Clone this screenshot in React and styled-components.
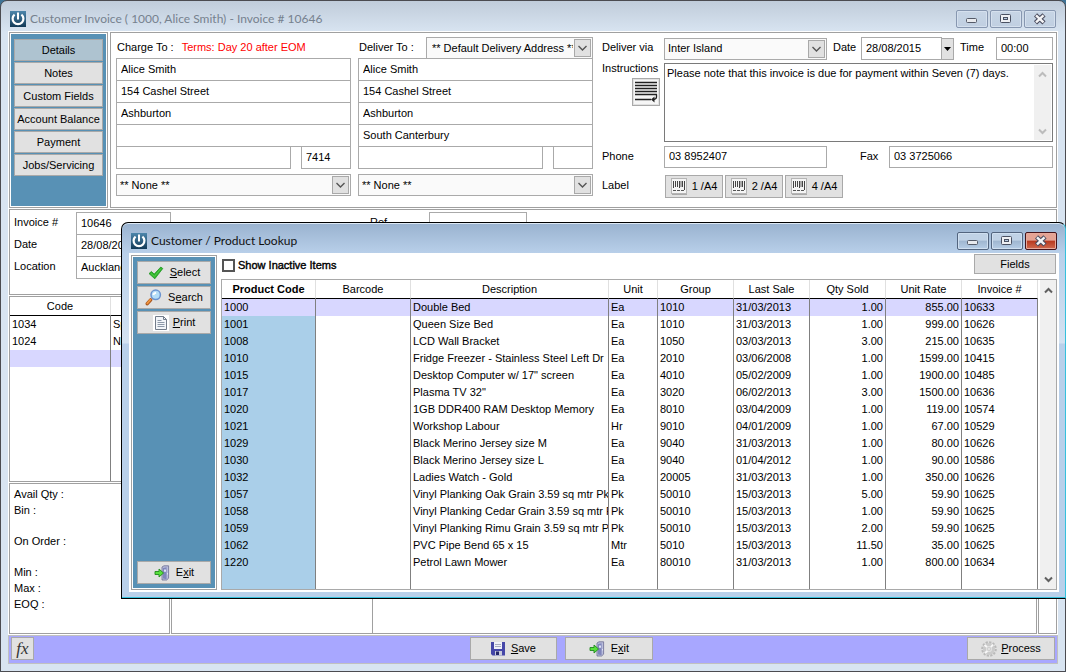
import styled, { createGlobalStyle, css } from "styled-components";

const GlobalStyle = createGlobalStyle`
  * {
    box-sizing: border-box;
  }
  body {
    margin: 0;
    background: #3f7396;
    color: #000;
    font: 11px/15px "Liberation Sans", Arial, sans-serif;
  }
  button, input, select, textarea {
    font: inherit;
    color: inherit;
    margin: 0;
    border-radius: 0;
  }
`;

/* ---------- windows ---------- */

const MainWindow = styled.div`
  position: relative;
  display: flex;
  flex-direction: column;
  height: 100vh;
  padding: 0 7px 7px;
  border: 1px solid #4b4b50;
  border-radius: 7px 7px 0 0;
  background: linear-gradient(#c0ccda, #d8e4f1 31px);
`;

const Dialog = styled.div`
  position: absolute;
  top: 221px;
  right: -1px;
  bottom: 72px;
  left: 120px;
  display: flex;
  flex-direction: column;
  padding: 0 6px 6px 7px;
  border: 1px solid #000;
  border-right-color: #35c0dc;
  border-radius: 7px 7px 0 0;
  background: linear-gradient(#99b2cf, #b9d0ea 31px, #d4e2f1 120px, #b9d0ea 121px);
  box-shadow: inset 0 -1px #35c0dc, inset 0 1px #dce8f4;
`;

const TitleBar = styled.header`
  display: flex;
  flex: none;
  align-items: center;
  gap: 4px;
  height: 30px;
  padding: 6px 2px 0;
`;

const Title = styled.h1`
  flex: 1;
  margin: 0;
  color: ${({ $muted }) => ($muted ? "#76818e" : "#111")};
  font: 12px/18px Lato, "Open Sans", sans-serif;
`;

const WindowButtons = styled.div`
  display: flex;
  gap: 2px;
`;

const WindowButton = styled.button`
  display: grid;
  place-items: center;
  width: 32px;
  height: 18px;
  padding: 0;
  border: 1px solid #8797b0;
  border-radius: 2px;
  background: linear-gradient(#c7d5e5, #c0cfe1);
  box-shadow: inset 0 0 0 1px #d5e0ee;

  ${({ $active }) =>
    $active &&
    css`
      border-color: #53657f;
      background: linear-gradient(#c0d2e6 45%, #9fb6d0 50%, #b6cde6);
      box-shadow: inset 0 0 0 1px #cfdff0;
    `}

  ${({ $danger }) =>
    $danger &&
    css`
      border-color: #44131a;
      background: linear-gradient(#e4a394 45%, #b8391f 50%, #cf6a4f);
      box-shadow: inset 0 0 0 1px #e6a99b;
    `}
`;

const WindowBody = styled.div`
  display: flex;
  flex: 1;
  min-height: 0;
  background: #fff;
`;

const MainBody = styled(WindowBody)`
  flex-direction: column;
`;

/* ---------- shared parts ---------- */

const Panel = styled.section`
  border: 1px solid #a0a0a0;
  background: #fff;
`;

const SideBar = styled.nav`
  display: flex;
  flex: none;
  flex-direction: column;
  width: ${({ $width }) => $width}px;
  padding: ${({ $pad }) => $pad};
  gap: ${({ $gap }) => $gap}px;
  border: 1px solid #a0a0a0;
  outline: 1px solid #fff;
  outline-offset: -2px;
  background: #5891b5;
`;

const Button = styled.button`
  display: flex;
  flex: none;
  align-items: center;
  justify-content: center;
  gap: ${({ $gap = 6 }) => $gap}px;
  width: ${({ $width }) => ($width ? `${$width}px` : "auto")};
  height: ${({ $height = 23 }) => $height}px;
  padding: 0;
  border: 1px solid #a9a9a9;
  background: ${({ $selected }) => ($selected ? "#aec3d0" : "#e1e1e1")};
  white-space: nowrap;
`;

const ExitSlot = styled.div`
  display: grid;
  margin-top: auto;
`;

const Field = styled.input`
  display: block;
  flex: ${({ $width }) => ($width ? "none" : "1")};
  width: ${({ $width }) => ($width ? `${$width}px` : "100%")};
  min-width: 0;
  height: ${({ $height = 23 }) => $height}px;
  padding: 0 4px 2px;
  border: 1px solid #aaa;
  outline: 0;
  background: #fff;
`;

const SelectBox = styled.div`
  position: relative;
  flex: none;
  width: ${({ $width }) => ($width ? `${$width}px` : "100%")};

  select {
    display: block;
    width: 100%;
    height: 22px;
    padding: 0 19px 0 ${({ $inset = 3 }) => $inset}px;
    border: 1px solid #aaa;
    outline: 0;
    appearance: none;
    background: #fafafa;
  }
  svg {
    position: absolute;
    top: 2px;
    right: 2px;
    border: 1px solid #a9a9a9;
    background: #e1e1e1;
    pointer-events: none;
  }
`;

const ScrollTrack = styled.div`
  display: flex;
  flex: none;
  flex-direction: column;
  align-items: center;
  justify-content: space-between;
  width: 17px;
  padding: 6px 0 5px;
  background: #f0f0f0;
`;

/* ---------- invoice header ---------- */

const TopRow = styled.div`
  display: flex;
  gap: 2px;
  margin: 1px 1px 0;
`;

const AddressPanel = styled(Panel)`
  display: flex;
  flex: 1;
  min-width: 0;
  padding: 4px 3px 9px 5px;
`;

const Address = styled.div`
  flex: none;
  width: 235px;
  margin-right: ${({ $gap }) => $gap}px;
`;

const AddressHead = styled.div`
  display: flex;
  align-items: center;
  justify-content: space-between;
  height: 21px;
  padding-left: 1px;
  line-height: 17px;

  ${SelectBox} {
    align-self: flex-start;
  }
`;

const Terms = styled.span`
  flex: 1;
  margin-left: 8px;
  color: #f00;
`;

const AddressLines = styled.div`
  display: grid;
  margin-bottom: 5px;

  ${Field} + ${Field}, div {
    margin-top: -1px;
  }
`;

const PostRow = styled.div`
  display: flex;
  gap: 10px;

  && ${Field} {
    margin-top: 0;
  }
`;

const Delivery = styled.div`
  flex: 1;
  min-width: 0;
`;

const DeliveryRow = styled.div`
  display: flex;
  align-items: ${({ $top }) => ($top ? "stretch" : "center")};
  margin-bottom: ${({ $space = 3 }) => $space}px;
`;

const Label = styled.label`
  flex: none;
  width: ${({ $width = 62 }) => $width}px;
  margin-left: ${({ $before = 0 }) => $before}px;
  padding-bottom: 2px;
`;

const Instructions = styled.div`
  flex: none;
  display: flex;
  flex-direction: column;
  width: 62px;

  label {
    line-height: 11px;
  }
  button {
    width: 28px;
    height: 28px;
    margin: 4px 4px 0 30px;
  }
`;

const NoteBox = styled.div`
  display: flex;
  flex: 1;
  height: 79px;
  padding: 1px;
  border: 1px solid #7a7a7a;

  textarea {
    flex: 1;
    min-width: 0;
    padding: 1px;
    border: 0;
    outline: 0;
    resize: none;
    overflow: hidden;
    background: #fff;
  }
`;

const DateDrop = styled.button`
  display: grid;
  place-items: center;
  flex: none;
  width: 13px;
  height: 22px;
  margin-left: -1px;
  padding: 0;
  border: 1px solid #a9a9a9;
  background: #e1e1e1;
`;

const LabelButtons = styled.div`
  display: flex;
  gap: 2px;
`;

/* ---------- invoice details ---------- */

const InvoiceInfo = styled(Panel)`
  display: flex;
  flex: none;
  height: 86px;
  margin: 1px 1px 0;
  padding: 2px 4px;
`;

const InfoFields = styled.div`
  display: grid;
  grid-template-columns: ${({ $columns }) => $columns};
  align-content: start;
  align-items: start;
  grid-auto-rows: 22px;

  label {
    line-height: 20px;
  }
`;

const GridPanel = styled(Panel)`
  display: flex;
  flex: 1;
  min-height: 0;
  margin: 1px 1px 0;
`;

const Grid = styled.table`
  flex: 1;
  width: 100%;
  height: 100%;
  table-layout: fixed;
  border-spacing: 0;

  th, td {
    overflow: hidden;
    padding: 0 2px;
    white-space: nowrap;
    text-align: left;
  }
  th {
    height: 19px;
    border-right: 1px solid #e0e0e0;
    border-bottom: 1px solid #000;
    font-weight: normal;
    text-align: center;
  }
  td {
    height: 17px;
    border-right: 1px solid #808080;
  }
  tr:last-child td {
    height: auto;
  }
`;

const Row = styled.tr`
  background: ${({ $selected }) => ($selected ? "#d8d7ff" : "transparent")};
`;

const BottomRow = styled.div`
  display: flex;
  flex: none;
  gap: 1px;
  height: 151px;
  margin: 1px 1px 0;
`;

const Stock = styled(Panel)`
  width: 161px;
  padding: 2px 4px;

  dl {
    margin: 0 0 15px;
  }
  dt {
    line-height: 16px;
  }
`;

const Totals = styled(Panel)`
  flex: 1;
  padding-left: 200px;

  &::after {
    display: block;
    height: 100%;
    border-left: 1px solid #a0a0a0;
    content: "";
  }
`;

const BottomTrack = styled(Panel)`
  width: 19px;
`;

const Footer = styled.footer`
  display: grid;
  flex: none;
  grid-template-columns: 460fr auto 403fr;
  height: 29px;
  margin-top: 1px;
  padding: 1px 2px 0;
  border: 1px solid #c0c0c0;
  background: #a8a7ff;
`;

const FooterGroup = styled.div`
  display: flex;
  gap: 8px;
  justify-content: ${({ $end }) => ($end ? "flex-end" : "flex-start")};
`;

/* ---------- lookup dialog ---------- */

const LookupBody = styled(WindowBody)`
  gap: 4px;
  padding: 2px;
`;

const Lookup = styled.div`
  display: flex;
  flex: 1;
  flex-direction: column;
  min-width: 0;
`;

const LookupBar = styled.div`
  display: flex;
  align-items: center;
  justify-content: space-between;
  height: 20px;
  margin: -1px 1px 5px;
`;

const CheckLabel = styled.label`
  display: flex;
  align-items: center;
  gap: 3px;
  padding-top: 2px;
  -webkit-text-stroke: 0.4px #000;

  input {
    width: 13px;
    height: 13px;
    border: 2px solid #555;
    appearance: none;
    background: #fff;
  }
`;

const LookupGrid = styled.div`
  display: flex;
  flex: 1;
  min-height: 0;
  border: 1px solid #a9a9a9;

  ${ScrollTrack} {
    width: 18px;
    padding: 7px 0 6px;
    border-left: 2px solid #fff;
  }
  th:first-child {
    font-weight: bold;
  }
  ${Row}:not(:first-child) td:first-child {
    background: #aacfe9;
  }
  td:nth-child(3) {
    padding-right: 0;
  }
  td:nth-child(7), td:nth-child(8) {
    text-align: right;
  }
`;

/* ---------- icons ---------- */

const PowerIcon = () => (
  <svg width="16" height="16" viewBox="0 0 16 16" aria-hidden="true">
    <defs>
      <linearGradient id="power" x2="0" y2="1">
        <stop stopColor="#4d86ab" />
        <stop offset="1" stopColor="#123a58" />
      </linearGradient>
    </defs>
    <path fill="url(#power)" d="M0 0h16v16H0z" />
    <path fill="none" stroke="#fff" strokeWidth="2.200" d="M4.600 3.600a5.400 5.400 0 1 0 6.800 0" />
    <path fill="none" stroke="#fff" strokeWidth="2" d="M8 1.500v7" />
  </svg>
);

const ChevronBox = () => (
  <svg width="17" height="18" viewBox="0 0 15 16" aria-hidden="true">
    <path fill="none" stroke="#555" strokeWidth="1.400" d="m3.500 6 4 4 4-4" />
  </svg>
);

const Chevron = ({ up, color = "#606060" }) => (
  <svg width="9" height="7" viewBox="0 0 9 7" aria-hidden="true">
    <path fill="none" stroke={color} strokeWidth="2" d={up ? "M1 5.500 4.500 2 8 5.500" : "M1 1.500 4.500 5 8 1.500"} />
  </svg>
);

const MinimizeIcon = () => (
  <svg width="12" height="12" viewBox="0 0 12 12" aria-hidden="true">
    <rect x=".5" y="5.500" width="10" height="4" rx="1" fill="#e8eaee" stroke="#545a68" />
  </svg>
);

const RestoreIcon = () => (
  <svg width="12" height="12" viewBox="0 0 12 12" aria-hidden="true">
    <rect x=".5" y="1.500" width="10" height="8" rx="1" fill="#eef0f4" stroke="#4a5162" />
    <rect x="3.500" y="4.500" width="4" height="2" fill="#b9cce2" stroke="#4a5162" />
  </svg>
);

const CloseIcon = () => (
  <svg width="12" height="12" viewBox="0 0 12 12" aria-hidden="true">
    <path stroke="#4a4c5e" strokeWidth="4.600" d="m1.500 1.800 8.500 8m0-8-8.500 8" />
    <path stroke="#f4f4f6" strokeWidth="2.400" d="m2 2.300 7.500 7m0-7-7.500 7" />
  </svg>
);

const WrapIcon = () => (
  <svg width="24" height="24" viewBox="0 0 24 24" aria-hidden="true">
    <path fill="#f6f6f6" d="M0 0h24v24H0z" />
    <path stroke="#222" strokeWidth="1.300" d="M1 2.500h22M1 5.500h22M1 8.500h22M1 11.500h22M1 14.500h22M1 19.500h16" />
    <path fill="none" stroke="#222" strokeWidth="1.300" d="M22.500 14.500v2.500q0 2-3 2.500" />
    <path fill="#222" d="m17 19.500 3.500-3v6z" />
  </svg>
);

const BarcodeIcon = () => (
  <svg width="17" height="17" viewBox="0 0 17 17" aria-hidden="true">
    <rect x=".5" y=".5" width="15" height="15" fill="#f4f4f4" stroke="#b5b5b5" />
    <path stroke="#aaa" d="M1 16.500h15" />
    <path stroke="#444" d="M2.500 3v7M4.500 3v6M6.500 3v6M8.500 3v7M11.500 3v6M13.500 3v9" />
    <path stroke="#aaa" d="M9.500 3v6M10.500 3v6" />
    <path stroke="#555" strokeDasharray="3 1" d="M2 12.500h11" />
  </svg>
);

const CheckIcon = () => (
  <svg width="16" height="16" viewBox="0 0 16 16" aria-hidden="true">
    <path fill="#2fb52c" stroke="#168f19" strokeWidth=".7" d="M1 8.600 3.400 6.500l2.800 2.600L12.800 2l2 1.500-8 10.300z" />
    <path fill="none" stroke="#5fd052" strokeWidth=".8" d="m3 8.300 3.300 3.200 6.500-7.800" />
  </svg>
);

const SearchIcon = () => (
  <svg width="17" height="17" viewBox="0 0 17 17" aria-hidden="true">
    <path stroke="#a9551c" strokeWidth="3.400" strokeLinecap="round" d="m2.300 14.700 3.400-3.800" />
    <path stroke="#f0953f" strokeWidth="1.800" strokeLinecap="round" d="m2.300 14.300 3.200-3.600" />
    <circle cx="10.700" cy="5.800" r="4.700" fill="#b5def8" stroke="#6b93cf" strokeWidth="1.500" />
    <path fill="none" stroke="#fff" strokeWidth="2" d="M8.300 6q.4-2 2.800-2.300" />
  </svg>
);

const PageIcon = () => (
  <svg width="16" height="16" viewBox="0 0 16 16" aria-hidden="true">
    <path fill="#fff" d="M0 0h16v16H0z" />
    <path fill="#f2f5f9" stroke="#727c8a" d="M2.500 1.500h8l3 3v10h-11z" />
    <path fill="none" stroke="#727c8a" d="M10.500 1.500v3h3" />
    <path stroke="#8c98a8" d="M4.500 5.500h4M4.500 7.500h7M4.500 9.500h7M4.500 11.500h7" />
  </svg>
);

const ExitIcon = () => (
  <svg width="16" height="16" viewBox="0 0 16 16" aria-hidden="true">
    <path fill="#b9bddc" stroke="#6a6c92" strokeWidth=".8" d="M8 2 10 .8h4.600v12.400l-2 1.800H8z" />
    <path fill="#8086bb" d="m9 3 3.600-.8v12L9 13.500z" />
    <path fill="#dfe3f6" d="M10 4.500h2v2.200h-2zM13 8h1v1.500h-1z" />
    <path fill="#59e03c" stroke="#1f8a1d" strokeWidth=".9" d="M1 6.500h4V4l4.500 4L5 12V9.500H1z" />
  </svg>
);

const SaveIcon = () => (
  <svg width="14" height="14" viewBox="0 0 14 14" aria-hidden="true">
    <path fill="#4547a8" d="M0 0h14v13.500H1.500L0 12z" />
    <path fill="#eef0f8" d="M3 0h8v7H3z" />
    <path stroke="#a6aabf" d="M4 2.500h6M4 4.500h6" />
    <path fill="#c9ccdc" d="M4 9h7v4.500H4z" />
    <path fill="#26286a" d="M5 9.500h3v3.500H5z" />
  </svg>
);

const GearIcon = () => (
  <svg width="16" height="16" viewBox="0 0 16 16" aria-hidden="true">
    <circle cx="8" cy="8" r="6.700" fill="none" stroke="#b9b9b9" strokeWidth="2.200" strokeDasharray="2.200 1.300" />
    <circle cx="8" cy="8" r="4.500" fill="#e6e6e6" stroke="#cbcbcb" strokeWidth="3" />
    <path stroke="#f8f8f8" strokeWidth="2" d="m3.500 4 2.500 2m6-2.500-2 2.500M4 12l2.500-2" />
    <circle cx="8" cy="8" r="1.800" fill="#e1e1e1" stroke="#c4c4c4" strokeWidth=".7" />
  </svg>
);

const FxText = styled.span`
  color: #333;
  font: italic 17px/18px "Liberation Serif", serif;
`;

/* ---------- data ---------- */

const tabs = ["Details", "Notes", "Custom Fields", "Account Balance", "Payment", "Jobs/Servicing"];

const columns = [
  ["Product Code", 94],
  ["Barcode", 95],
  ["Description", 198],
  ["Unit", 49],
  ["Group", 76],
  ["Last Sale", 76],
  ["Qty Sold", 76],
  ["Unit Rate", 76],
  ["Invoice #", 76],
];

const products = [
  ["1000", "", "Double Bed", "Ea", "1010", "31/03/2013", "1.00", "855.00", "10633"],
  ["1001", "", "Queen Size Bed", "Ea", "1010", "31/03/2013", "1.00", "999.00", "10626"],
  ["1008", "", "LCD Wall Bracket", "Ea", "1050", "03/03/2013", "3.00", "215.00", "10635"],
  ["1010", "", "Fridge Freezer - Stainless Steel Left Dr", "Ea", "2010", "03/06/2008", "1.00", "1599.00", "10415"],
  ["1015", "", 'Desktop Computer w/ 17" screen', "Ea", "4010", "05/02/2009", "1.00", "1900.00", "10485"],
  ["1017", "", 'Plasma TV 32"', "Ea", "3020", "06/02/2013", "3.00", "1500.00", "10636"],
  ["1020", "", "1GB DDR400 RAM Desktop Memory", "Ea", "8010", "03/04/2009", "1.00", "119.00", "10574"],
  ["1021", "", "Workshop Labour", "Hr", "9010", "04/01/2009", "1.00", "67.00", "10529"],
  ["1029", "", "Black Merino Jersey size M", "Ea", "9040", "31/03/2013", "1.00", "80.00", "10626"],
  ["1030", "", "Black Merino Jersey size L", "Ea", "9040", "01/04/2012", "1.00", "90.00", "10586"],
  ["1032", "", "Ladies Watch - Gold", "Ea", "20005", "31/03/2013", "1.00", "350.00", "10626"],
  ["1057", "", "Vinyl Planking Oak Grain 3.59 sq mtr Pk", "Pk", "50010", "15/03/2013", "5.00", "59.90", "10625"],
  ["1058", "", "Vinyl Planking Cedar Grain 3.59 sq mtr Pk", "Pk", "50010", "15/03/2013", "1.00", "59.90", "10625"],
  ["1059", "", "Vinyl Planking Rimu Grain 3.59 sq mtr Pk", "Pk", "50010", "15/03/2013", "2.00", "59.90", "10625"],
  ["1062", "", "PVC Pipe Bend 65 x 15", "Mtr", "5010", "15/03/2013", "11.50", "35.00", "10625"],
  ["1220", "", "Petrol Lawn Mower", "Ea", "80010", "31/03/2013", "1.00", "800.00", "10634"],
];

/* ---------- components ---------- */

function WindowControls({ active }) {
  return (
    <WindowButtons>
      <WindowButton $active={active} aria-label='Minimize'>
        <MinimizeIcon />
      </WindowButton>
      <WindowButton $active={active} aria-label='Restore'>
        <RestoreIcon />
      </WindowButton>
      <WindowButton $danger={active} aria-label='Close'>
        <CloseIcon />
      </WindowButton>
    </WindowButtons>
  );
}

function Select({ value, label, id, ...rest }) {
  return (
    <SelectBox {...rest}>
      <select id={id} aria-label={label}>
        <option>{value}</option>
      </select>
      <ChevronBox />
    </SelectBox>
  );
}

function AddressBlock({ name, lines, postcode, postWidth, children, gap }) {
  return (
    <Address $gap={gap}>
      <AddressHead>{children}</AddressHead>
      <AddressLines>
        {lines.map((line, i) => (
          <Field key={i} defaultValue={line} aria-label={`${name} line ${i + 1}`} />
        ))}
        <PostRow>
          <Field aria-label={`${name} city`} />
          <Field $width={postWidth} defaultValue={postcode} aria-label={`${name} postcode`} />
        </PostRow>
      </AddressLines>
      <Select value='** None **' label={`${name} contact`} />
    </Address>
  );
}

function DeliveryDetails() {
  return (
    <Delivery>
      <DeliveryRow>
        <Label htmlFor='via'>Deliver via</Label>
        <Select id='via' value='Inter Island' $width={163} />
        <Label htmlFor='sent' $before={6} $width={28}>
          Date
        </Label>
        <Field id='sent' $width={81} defaultValue='28/08/2015' />
        <DateDrop aria-label='Pick date'>
          <svg width='7' height='4' viewBox='0 0 7 4' aria-hidden='true'>
            <path d='M0 0h7L3.500 4z' />
          </svg>
        </DateDrop>
        <Label htmlFor='time' $before={6} $width={36}>
          Time
        </Label>
        <Field id='time' defaultValue='00:00' />
      </DeliveryRow>
      <DeliveryRow $top $space={4}>
        <Instructions>
          <label htmlFor='instructions'>Instructions</label>
          <Button aria-label='Wrap text'>
            <WrapIcon />
          </Button>
        </Instructions>
        <NoteBox>
          <textarea id='instructions' defaultValue='Please note that this invoice is due for payment within Seven (7) days.' />
          <ScrollTrack>
            <Chevron up color='#bcbcbc' />
            <Chevron color='#bcbcbc' />
          </ScrollTrack>
        </NoteBox>
      </DeliveryRow>
      <DeliveryRow $space={7}>
        <Label htmlFor='phone'>Phone</Label>
        <Field id='phone' $width={163} $height={22} defaultValue='03 8952407' />
        <Label htmlFor='fax' $before={33} $width={29}>
          Fax
        </Label>
        <Field id='fax' $height={22} defaultValue='03 3725066' />
      </DeliveryRow>
      <DeliveryRow $space={0}>
        <Label as='span' $width={63}>
          Label
        </Label>
        <LabelButtons>
          {[1, 2, 4].map((n) => (
            <Button key={n} $width={58} $gap={4}>
              <BarcodeIcon />
              {n} /A4
            </Button>
          ))}
        </LabelButtons>
      </DeliveryRow>
    </Delivery>
  );
}

function LookupDialog() {
  return (
    <Dialog role='dialog' aria-label='Customer / Product Lookup'>
      <TitleBar>
        <PowerIcon />
        <Title as='h2'>Customer / Product Lookup</Title>
        <WindowControls active />
      </TitleBar>
      <LookupBody>
        <SideBar $width={86} $gap={2} $pad='5px'>
          <Button>
            <CheckIcon />
            <span>
              <u>S</u>elect
            </span>
          </Button>
          <Button>
            <SearchIcon />
            <span>
              S<u>e</u>arch
            </span>
          </Button>
          <Button $gap={4}>
            <PageIcon />
            <span>
              <u>P</u>rint
            </span>
          </Button>
          <ExitSlot>
            <Button>
              <ExitIcon />
              <span>
                E<u>x</u>it
              </span>
            </Button>
          </ExitSlot>
        </SideBar>
        <Lookup>
          <LookupBar>
            <CheckLabel>
              <input type='checkbox' />
              Show Inactive Items
            </CheckLabel>
            <Button $width={82} $height={20}>
              Fields
            </Button>
          </LookupBar>
          <LookupGrid>
            <Grid>
              <colgroup>
                {columns.map(([name, width]) => (
                  <col key={name} width={width} />
                ))}
              </colgroup>
              <thead>
                <tr>
                  {columns.map(([name]) => (
                    <th key={name}>{name}</th>
                  ))}
                </tr>
              </thead>
              <tbody>
                {products.map((product, i) => (
                  <Row key={product[0]} $selected={i === 0}>
                    {product.map((cell, j) => (
                      <td key={j}>{cell}</td>
                    ))}
                  </Row>
                ))}
                <Row>
                  {columns.map(([name]) => (
                    <td key={name} />
                  ))}
                </Row>
              </tbody>
            </Grid>
            <ScrollTrack>
              <Chevron up />
              <Chevron />
            </ScrollTrack>
          </LookupGrid>
        </Lookup>
      </LookupBody>
    </Dialog>
  );
}

function App() {
  return (
    <>
      <GlobalStyle />
      <MainWindow>
        <TitleBar>
          <PowerIcon />
          <Title $muted>Customer Invoice ( 1000, Alice Smith) - Invoice # 10646</Title>
          <WindowControls />
        </TitleBar>
        <MainBody as='main'>
          <TopRow>
            <SideBar $width={99} $gap={1} $pad='6px 4px'>
              {tabs.map((tab, i) => (
                <Button key={tab} $height={22} $selected={i === 0}>
                  {tab}
                </Button>
              ))}
            </SideBar>
            <AddressPanel>
              <AddressBlock
                name='Charge to'
                gap={7}
                lines={["Alice Smith", "154 Cashel Street", "Ashburton", ""]}
                postcode='7414'
                postWidth={50}
              >
                Charge To :<Terms>Terms: Day 20 after EOM</Terms>
              </AddressBlock>
              <AddressBlock
                name='Deliver to'
                gap={9}
                lines={["Alice Smith", "154 Cashel Street", "Ashburton", "South Canterbury"]}
                postcode=''
                postWidth={40}
              >
                Deliver To :
                <Select value='** Default Delivery Address **' label='Delivery address' $width={167} $inset={5} />
              </AddressBlock>
              <DeliveryDetails />
            </AddressPanel>
          </TopRow>
          <InvoiceInfo>
            <InfoFields $columns='62px 95px'>
              <label htmlFor='number'>Invoice #</label>
              <Field id='number' defaultValue='10646' />
              <label htmlFor='date'>Date</label>
              <Field id='date' defaultValue='28/08/2015' />
              <label htmlFor='location'>Location</label>
              <Field id='location' defaultValue='Auckland' />
            </InfoFields>
            <Label as='div' $before={199} $width={157}>
              <InfoFields $columns='59px 98px'>
                <label htmlFor='ref'>Ref</label>
                <Field id='ref' />
              </InfoFields>
            </Label>
          </InvoiceInfo>
          <GridPanel>
            <Grid>
              <colgroup>
                <col width='101' />
                <col />
              </colgroup>
              <thead>
                <tr>
                  <th>Code</th>
                  <th />
                </tr>
              </thead>
              <tbody>
                <Row>
                  <td>1034</td>
                  <td>Sp</td>
                </Row>
                <Row>
                  <td>1024</td>
                  <td>No</td>
                </Row>
                <Row $selected>
                  <td />
                  <td />
                </Row>
                <Row>
                  <td />
                  <td />
                </Row>
              </tbody>
            </Grid>
          </GridPanel>
          <BottomRow>
            <Stock>
              <dl>
                <dt>Avail Qty :</dt>
                <dt>Bin :</dt>
              </dl>
              <dl>
                <dt>On Order :</dt>
              </dl>
              <dl>
                <dt>Min :</dt>
                <dt>Max :</dt>
                <dt>EOQ :</dt>
              </dl>
            </Stock>
            <Totals />
            <BottomTrack />
          </BottomRow>
          <Footer>
            <FooterGroup>
              <Button $width={23} aria-label='Function'>
                <FxText>fx</FxText>
              </Button>
            </FooterGroup>
            <FooterGroup>
              <Button $width={87}>
                <SaveIcon />
                <span>
                  <u>S</u>ave
                </span>
              </Button>
              <Button $width={88}>
                <ExitIcon />
                <span>
                  E<u>x</u>it
                </span>
              </Button>
            </FooterGroup>
            <FooterGroup $end>
              <Button $width={88} $gap={4}>
                <GearIcon />
                <span>
                  <u>P</u>rocess
                </span>
              </Button>
            </FooterGroup>
          </Footer>
        </MainBody>
        <LookupDialog />
      </MainWindow>
    </>
  );
}

export default App;
